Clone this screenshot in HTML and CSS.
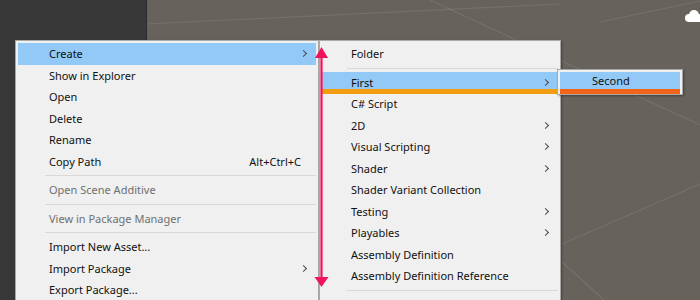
FILE: index.html
```html
<!DOCTYPE html>
<html lang="en">
<head>
    <meta charset="UTF-8">
    <title>Project Context Menu</title>
    <link rel="stylesheet" href="styles.css">
</head>
<body>
    <div class="editor">
        <div class="project-pane"></div>
        <div class="scene-view">
            <svg class="scene-grid" width="553" height="300" viewBox="147 0 553 300">
                <line x1="147" y1="24" x2="560" y2="4" />
                <line x1="600" y1="22" x2="700" y2="1" />
                <line x1="430" y1="0" x2="700" y2="125" />
                <line x1="562" y1="244" x2="700" y2="184" />
                <line x1="562" y1="262" x2="604" y2="300" />
            </svg>
            <svg class="scene-cloud" width="16" height="14" viewBox="0 0 16 14">
                <circle cx="5" cy="9" r="4" />
                <circle cx="10" cy="6" r="5" />
                <circle cx="14" cy="9" r="4" />
                <rect x="5" y="8" width="11" height="5" />
            </svg>
        </div>
    </div>

    <!-- main context menu -->
    <div class="menu menu-main">
        <div class="item active"><span class="label">Create</span><span class="chevron"></span></div>
        <div class="item"><span class="label">Show in Explorer</span></div>
        <div class="item"><span class="label">Open</span></div>
        <div class="item"><span class="label">Delete</span></div>
        <div class="item"><span class="label">Rename</span></div>
        <div class="item"><span class="label">Copy Path</span><span class="shortcut">Alt+Ctrl+C</span></div>
        <div class="sep"></div>
        <div class="item disabled"><span class="label">Open Scene Additive</span></div>
        <div class="sep"></div>
        <div class="item disabled"><span class="label">View in Package Manager</span></div>
        <div class="sep"></div>
        <div class="item"><span class="label">Import New Asset...</span></div>
        <div class="item"><span class="label">Import Package</span><span class="chevron"></span></div>
        <div class="item"><span class="label">Export Package...</span></div>
    </div>

    <!-- Create submenu -->
    <div class="menu menu-create">
        <div class="item"><span class="label">Folder</span></div>
        <div class="sep"></div>
        <div class="item active drop-bar"><span class="label">First</span><span class="chevron"></span></div>
        <div class="item"><span class="label">C# Script</span></div>
        <div class="item"><span class="label">2D</span><span class="chevron"></span></div>
        <div class="item"><span class="label">Visual Scripting</span><span class="chevron"></span></div>
        <div class="item"><span class="label">Shader</span><span class="chevron"></span></div>
        <div class="item"><span class="label">Shader Variant Collection</span></div>
        <div class="item"><span class="label">Testing</span><span class="chevron"></span></div>
        <div class="item"><span class="label">Playables</span><span class="chevron"></span></div>
        <div class="item"><span class="label">Assembly Definition</span></div>
        <div class="item"><span class="label">Assembly Definition Reference</span></div>
        <div class="sep"></div>
        <div class="item"><span class="label">TextMeshPro</span><span class="chevron"></span></div>
    </div>

    <!-- First submenu -->
    <div class="menu menu-first">
        <div class="item active"><span class="label">Second</span></div>
    </div>

    <!-- reorder arrow -->
    <svg class="drag-arrow" width="16" height="242" viewBox="0 0 16 242">
        <line x1="7.5" y1="8" x2="7.5" y2="232" />
        <polygon points="7.5,0 14,11 1,11" />
        <polygon points="0.5,230 14.5,230 7.5,240" />
    </svg>
</body>
</html>
```

FILE: styles.css
```css
* { margin: 0; padding: 0; box-sizing: border-box; }

body {
    width: 700px;
    height: 300px;
    overflow: hidden;
    position: relative;
    font-family: 'Noto Sans', 'Segoe UI', sans-serif;
    font-size: 11px;
    color: #101010;
}

.editor {
    display: flex;
    height: 300px;
}

.project-pane {
    width: 147px;
    background: #383838;
    border-right: 1px solid #2a2a2a;
}

.scene-view {
    flex: 1;
    position: relative;
    background: #67625c;
}

.scene-grid line {
    stroke: rgba(255, 255, 255, 0.09);
    stroke-width: 1.2;
}

.scene-cloud {
    position: absolute;
    top: 9px;
    right: 0;
    fill: #ffffff;
}

/* menus */
.menu {
    position: absolute;
    background: #f0f0f0;
    border: 1px solid #a9a9a9;
    padding: 2px;
    box-shadow: 1px 1px 2px rgba(0, 0, 0, 0.35);
}

.menu-main {
    left: 15px;
    top: 40px;
    width: 304px;
    height: 280px;
}

.menu-create {
    left: 319px;
    top: 40px;
    width: 242px;
    height: 280px;
}

.menu-first {
    left: 557px;
    top: 69px;
    width: 126px;
    padding-bottom: 0;
}

.item {
    display: flex;
    align-items: center;
    height: 21.5px;
    padding-left: 31px;
    padding-right: 8px;
    white-space: nowrap;
    position: relative;
}

.menu-create .item {
    padding-left: 29px;
}

.menu-first .item {
    height: 22px;
    padding-left: 32px;
    align-items: flex-start;
    padding-top: 1px;
}

.item.active {
    background: #92c9f7;
}

.item.disabled {
    color: #6f6f6f;
}

.label {
    flex: 1;
}

.shortcut {
    padding-right: 7px;
}

.chevron {
    width: 5px;
    height: 5px;
    border-top: 1px solid #4a4a4a;
    border-right: 1px solid #4a4a4a;
    transform: rotate(45deg);
    margin-right: 2px;
}

.sep {
    height: 1px;
    margin: 3px 0 3px 27px;
    background: #d8d8d8;
}

.menu-create .sep {
    margin-left: 25px;
}

/* drop position indicators */
.drop-bar::after {
    content: '';
    position: absolute;
    left: 0;
    right: 0;
    top: 17.5px;
    height: 5px;
    background: #f39c12;
}

.menu-first .item::after {
    content: '';
    position: absolute;
    left: 0;
    right: 0;
    bottom: 0;
    height: 5px;
    background: #f2641a;
}

.drag-arrow {
    position: absolute;
    left: 314px;
    top: 47px;
}

.drag-arrow line {
    stroke: #f0145c;
    stroke-width: 2.2;
}

.drag-arrow polygon {
    fill: #f0145c;
}
```
